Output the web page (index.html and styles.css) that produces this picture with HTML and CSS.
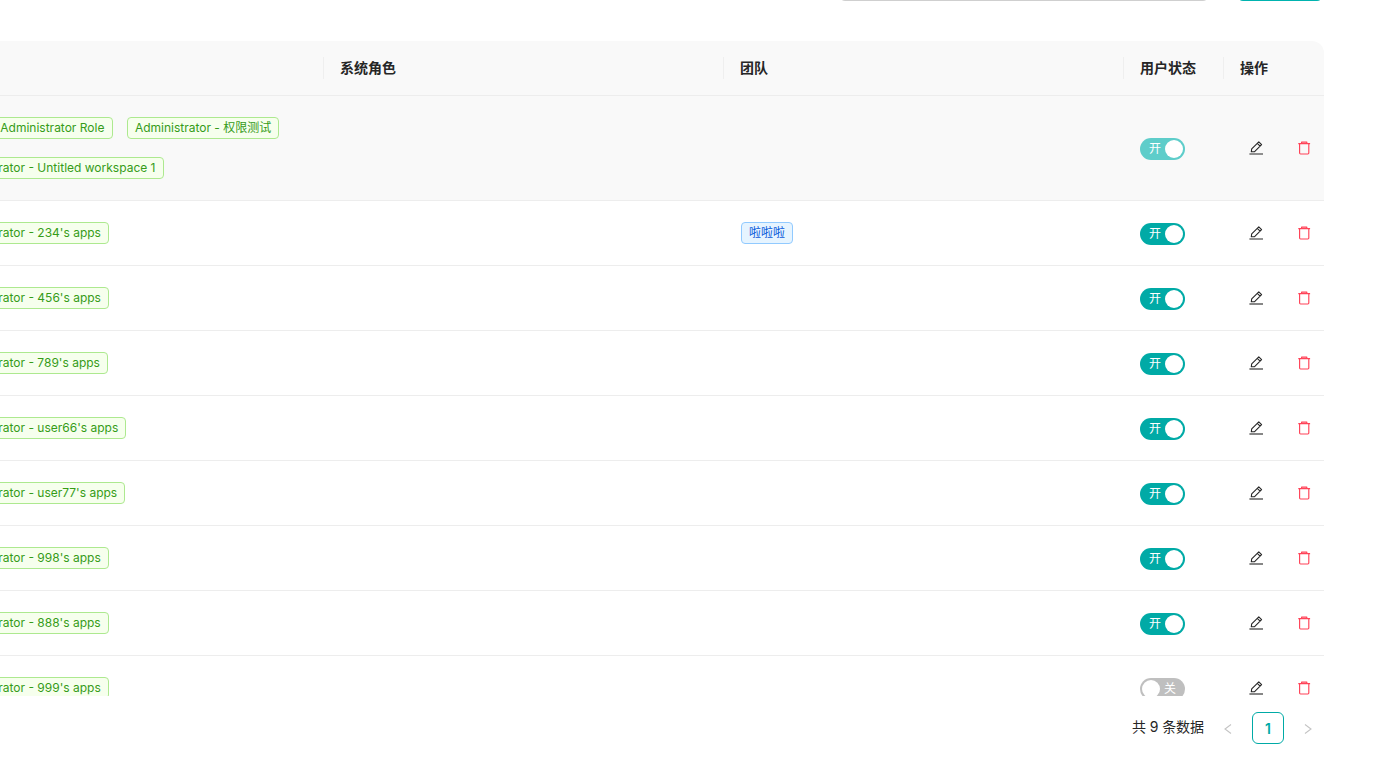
FILE: index.html
```html
<!DOCTYPE html>
<html lang="zh-CN">
<head>
<meta charset="utf-8">
<title>用户管理</title>
<link rel="stylesheet" href="styles.css">
</head>
<body>
<svg class="sprites" width="0" height="0" aria-hidden="true">
  <symbol id="i-edit" viewBox="0 0 16 16">
    <path d="M.4 14h13.6" fill="none" stroke="#262626" stroke-width="1.1"/>
    <path d="M2.3 11.8l.4-2.9 7.1-7 2.8 2.8-7 7zM8.3 3.4l2.8 2.8" fill="none" stroke="#262626" stroke-width="1.1" stroke-linejoin="round"/>
  </symbol>
  <symbol id="i-trash" viewBox="0 0 16 16">
    <path d="M.3 3.6h11.8M3.6 3.4V2.1h5.2v1.3M1.6 3.8v9.3c0 .6.3.9.9.9h7.4c.6 0 .9-.3.9-.9V3.8" fill="none" stroke="#ff4358" stroke-width="1.15" stroke-linejoin="round"/>
  </symbol>
</svg>
<div class="page">
  <div class="toolbar">
    <div class="search"></div>
    <div class="add-button"></div>
  </div>
  <div class="table-clip">
    <table class="users">
      <colgroup><col class="c-wide"><col class="c-wide"><col class="c-wide"><col class="c-narrow"><col class="c-narrow"></colgroup>
      <thead>
        <tr><th></th><th class="sep">系统角色</th><th class="sep">团队</th><th class="sep">用户状态</th><th class="sep">操作</th></tr>
      </thead>
      <tbody>
        <tr class="hovered">
          <td><div class="tags"><span class="tag">Admini - Administrator Role</span><span class="tag">Administrator - 权限测试</span><span class="tag">Administrator - Untitled workspace 1</span></div></td>
          <td></td><td></td>
          <td><span class="switch on"><span class="switch-text">开</span><span class="knob"></span></span></td>
          <td><div class="actions"><svg class="icon"><use href="#i-edit"/></svg><svg class="icon"><use href="#i-trash"/></svg></div></td>
        </tr>
        <tr>
          <td><div class="tags"><span class="tag">Administrator - 234's apps</span></div></td>
          <td></td><td><span class="tag blue">啦啦啦</span></td>
          <td><span class="switch on"><span class="switch-text">开</span><span class="knob"></span></span></td>
          <td><div class="actions"><svg class="icon"><use href="#i-edit"/></svg><svg class="icon"><use href="#i-trash"/></svg></div></td>
        </tr>
        <tr>
          <td><div class="tags"><span class="tag">Administrator - 456's apps</span></div></td>
          <td></td><td></td>
          <td><span class="switch on"><span class="switch-text">开</span><span class="knob"></span></span></td>
          <td><div class="actions"><svg class="icon"><use href="#i-edit"/></svg><svg class="icon"><use href="#i-trash"/></svg></div></td>
        </tr>
        <tr>
          <td><div class="tags"><span class="tag">Administrator - 789's apps</span></div></td>
          <td></td><td></td>
          <td><span class="switch on"><span class="switch-text">开</span><span class="knob"></span></span></td>
          <td><div class="actions"><svg class="icon"><use href="#i-edit"/></svg><svg class="icon"><use href="#i-trash"/></svg></div></td>
        </tr>
        <tr>
          <td><div class="tags"><span class="tag">Administrator - user66's apps</span></div></td>
          <td></td><td></td>
          <td><span class="switch on"><span class="switch-text">开</span><span class="knob"></span></span></td>
          <td><div class="actions"><svg class="icon"><use href="#i-edit"/></svg><svg class="icon"><use href="#i-trash"/></svg></div></td>
        </tr>
        <tr>
          <td><div class="tags"><span class="tag">Administrator - user77's apps</span></div></td>
          <td></td><td></td>
          <td><span class="switch on"><span class="switch-text">开</span><span class="knob"></span></span></td>
          <td><div class="actions"><svg class="icon"><use href="#i-edit"/></svg><svg class="icon"><use href="#i-trash"/></svg></div></td>
        </tr>
        <tr>
          <td><div class="tags"><span class="tag">Administrator - 998's apps</span></div></td>
          <td></td><td></td>
          <td><span class="switch on"><span class="switch-text">开</span><span class="knob"></span></span></td>
          <td><div class="actions"><svg class="icon"><use href="#i-edit"/></svg><svg class="icon"><use href="#i-trash"/></svg></div></td>
        </tr>
        <tr>
          <td><div class="tags"><span class="tag">Administrator - 888's apps</span></div></td>
          <td></td><td></td>
          <td><span class="switch on"><span class="switch-text">开</span><span class="knob"></span></span></td>
          <td><div class="actions"><svg class="icon"><use href="#i-edit"/></svg><svg class="icon"><use href="#i-trash"/></svg></div></td>
        </tr>
        <tr>
          <td><div class="tags"><span class="tag">Administrator - 999's apps</span></div></td>
          <td></td><td></td>
          <td><span class="switch off"><span class="knob"></span><span class="switch-text">关</span></span></td>
          <td><div class="actions"><svg class="icon"><use href="#i-edit"/></svg><svg class="icon"><use href="#i-trash"/></svg></div></td>
        </tr>
      </tbody>
    </table>
  </div>
  <div class="pagination">
    <span class="total">共 9 条数据</span>
    <span class="arrow">
      <svg width="10" height="10" viewBox="0 0 10 10"><path d="M8 .5L2 5l6 4.5" fill="none" stroke="#c4c4c4" stroke-width="1.1"/></svg>
    </span>
    <span class="page-current">1</span>
    <span class="arrow">
      <svg width="10" height="10" viewBox="0 0 10 10"><path d="M2 .5L8 5 2 9.5" fill="none" stroke="#c4c4c4" stroke-width="1.1"/></svg>
    </span>
  </div>
</div>
</body>
</html>
```
FILE: styles.css
```css
* { box-sizing: border-box; }
html, body { margin: 0; height: 100%; overflow: hidden; background: #fff; }
body {
  font-family: Inter, "Noto Sans CJK SC", "Liberation Sans", sans-serif;
  font-size: 14px;
  color: #262626;
}
.sprites { display: block; }
.page { width: 1394px; height: 783px; overflow: hidden; }

.toolbar {
  display: flex;
  justify-content: flex-end;
  gap: 28px;
  height: 32px;
  margin-top: -31px;
  margin-right: 71px;
}
.search { width: 370px; height: 32px; border: 1px solid #cfcfcf; border-radius: 6px; }
.add-button { width: 86px; height: 32px; background: #00b3af; border-radius: 6px; }

.table-clip {
  width: 1400px;
  height: 655px;
  margin-top: 40px;
  margin-left: -76px;
  overflow: hidden;
  border-radius: 0 12px 0 0;
}
.users {
  width: 1400px;
  table-layout: fixed;
  border-collapse: separate;
  border-spacing: 0;
}
.c-wide { width: 400px; }
.c-narrow { width: 100px; }
.users th {
  position: relative;
  height: 55px;
  padding: 0 16px 2px;
  background: #f9f9f9;
  border-bottom: 1px solid #ededed;
  font-size: 14px;
  font-weight: 600;
  text-align: left;
  color: #262626;
}
.users th.sep::before {
  content: "";
  position: absolute;
  left: -1px;
  top: 16px;
  width: 1px;
  height: 22px;
  background: #efefef;
}
.users td {
  padding: 0 16px;
  height: 65px;
  border-bottom: 1px solid #ededed;
  vertical-align: middle;
}
.users .hovered td { background: #f9f9f9; }
.users td:first-child { padding-left: 17px; }

.tags {
  display: flex;
  flex-wrap: wrap;
  gap: 18px 14.3px;
  padding: 21px 0 21px;
}
.tag {
  display: inline-flex;
  align-items: center;
  height: 22px;
  padding: 0 7.2px 0 7px;
  font-size: 12px;
  line-height: 20px;
  white-space: nowrap;
  color: #359c18;
  background: #f6ffed;
  border: 1px solid #ade98f;
  border-radius: 4px;
}
.tag.blue {
  margin-left: 1px;
  color: #0958d9;
  background: #e6f4ff;
  border-color: #91caff;
}

.switch {
  display: flex;
  align-items: center;
  justify-content: space-between;
  width: 45px;
  height: 22px;
  margin-top: 2px;
  padding: 2px;
  border-radius: 11px;
  color: #fff;
  font-size: 12px;
  line-height: 18px;
}
.switch.on { background: #00aaa6; padding-left: 9px; }
.switch.off { background: #bfbfbf; padding-right: 9px; }
.hovered .switch.on { background: #5ecdca; }
.knob { width: 18px; height: 18px; border-radius: 50%; background: #fff; }

.actions { display: flex; align-items: center; gap: 33px; padding-left: 9px; }
.icon { display: block; flex: none; width: 16px; height: 16px; }

.pagination {
  display: flex;
  align-items: center;
  height: 32px;
  margin-top: 16px;
  margin-left: 1132px;
}
.total { width: 72px; padding-bottom: 4px; font-size: 14px; letter-spacing: -0.1px; white-space: nowrap; color: #262626; }
.arrow { display: flex; align-items: center; justify-content: center; width: 32px; height: 32px; margin-left: 8px; padding-top: 2px; }
.pagination .page-current {
  display: flex;
  align-items: center;
  justify-content: center;
  width: 32px;
  height: 32px;
  margin-left: 8px;
  border: 1px solid #00aaa6;
  border-radius: 6px;
  color: #00aaa6;
  font-weight: 600;
  font-size: 14px;
}
```
